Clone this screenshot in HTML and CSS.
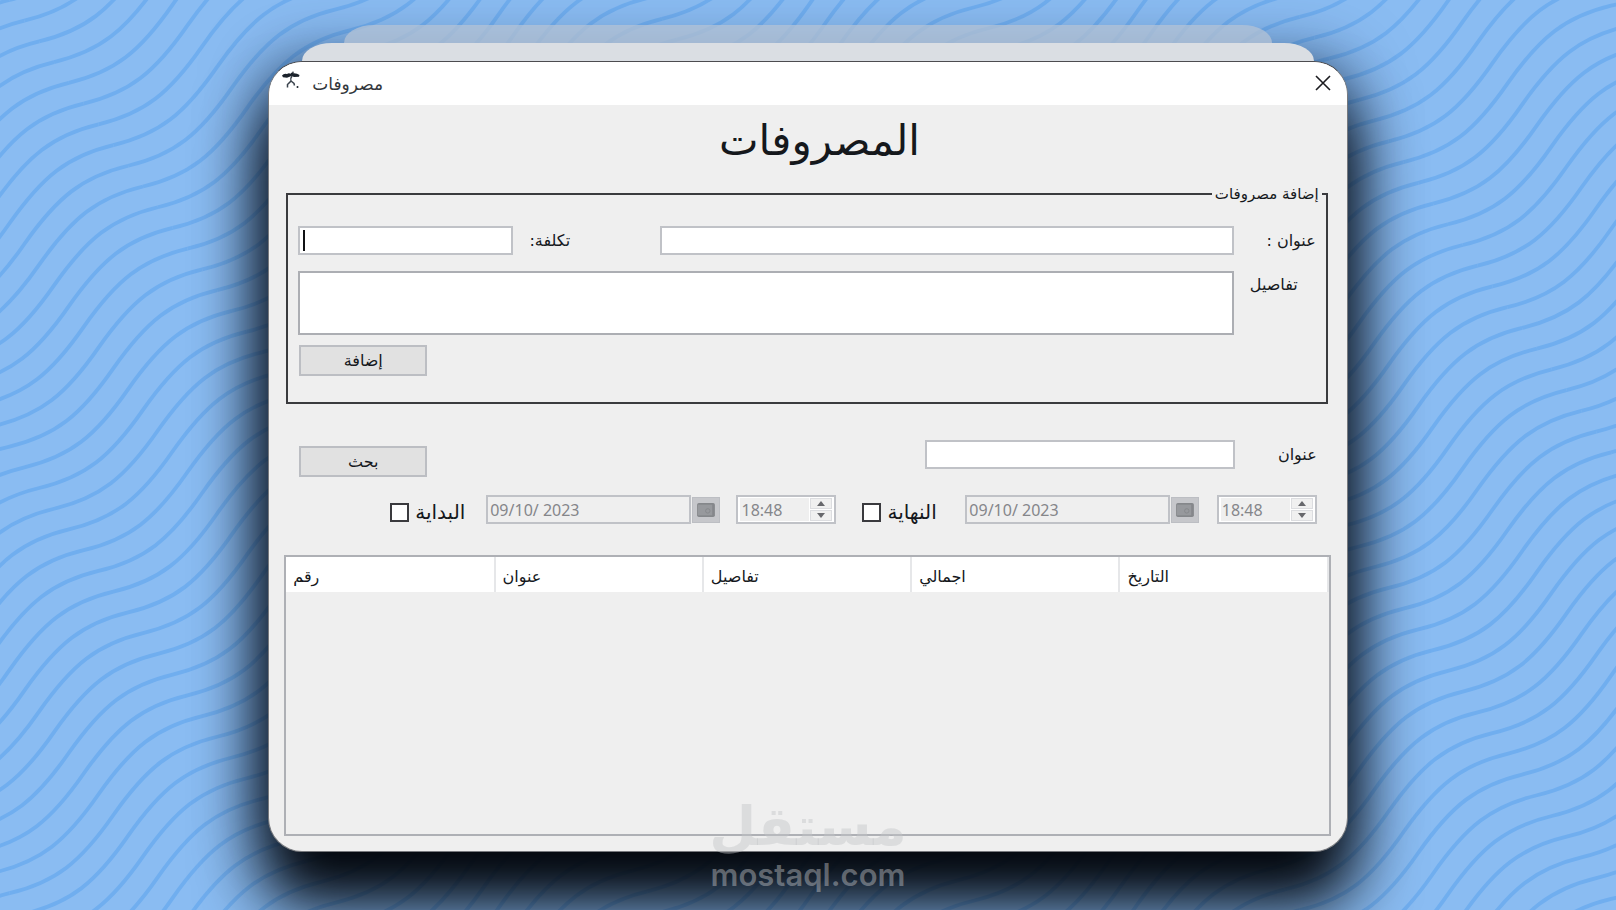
FILE: index.html
```html
<!DOCTYPE html>
<html lang="ar">
<head>
<meta charset="utf-8">
<title>مصروفات</title>
<link rel="stylesheet" href="styles.css">
</head>
<body>
<svg class="waves" viewBox="0 0 1616 910" preserveAspectRatio="xMidYMid slice" aria-hidden="true">
  <defs>
    <path id="half" d="M0 0c46-11 71-31 103.8-78.2c33-47 58-67.2 103.8-78.2c46-11 71-31 103.8-78.2c33-47 58-67.2 103.8-78.2"/>
    <g id="p4"><use href="#half"/><use href="#half" x="415.2" y="-312.8"/></g>
    <g id="p8"><use href="#p4"/><use href="#p4" x="830.4" y="-625.6"/></g>
    <g id="p16"><use href="#p8"/><use href="#p8" x="1660.8" y="-1251.2"/></g>
    <g id="w2"><use href="#p16"/><use href="#p16" x="14.83" y="20.73"/></g>
    <g id="w4"><use href="#w2"/><use href="#w2" x="29.66" y="41.46"/></g>
    <g id="w8"><use href="#w4"/><use href="#w4" x="59.32" y="82.92"/></g>
    <g id="w16"><use href="#w8"/><use href="#w8" x="118.64" y="165.84"/></g>
    <g id="w32"><use href="#w16"/><use href="#w16" x="237.28" y="331.68"/></g>
    <g id="w64"><use href="#w32"/><use href="#w32" x="474.56" y="663.36"/></g>
  </defs>
  <g class="wave-lines" transform="translate(-1250.9 917.6)">
    <use href="#w64"/>
    <use href="#w16" x="949.12" y="1326.72"/>
  </g>
</svg>

<main class="stage">
  <section class="window">
    <header class="titlebar">
      <svg class="app-icon" viewBox="0 0 18 18" aria-hidden="true">
        <path d="M0 4.500Q2 2 5 3Q7 1.500 8.500 2.800Q10 .8 11.500 2.200Q15 2 17.500 4L17 5.800L12 6L9.500 5L5 6.800L1 6.200Z"/>
        <path class="line" d="M10 5Q8 7.500 9 10L5.500 13.500V16.500M9 10L12 12.500L12.500 14.500"/>
        <circle cx="15.500" cy="16" r="1"/><circle cx="11" cy="1.200" r=".8"/>
      </svg>
      <span class="titlebar-text" dir="rtl">مصروفات</span>
      <button class="close" type="button" aria-label="إغلاق">
        <svg viewBox="0 0 16 16"><path d="M1 1L15 15M15 1L1 15"/></svg>
      </button>
    </header>

    <div class="content">
      <h1 dir="rtl">المصروفات</h1>

      <fieldset class="add" dir="rtl">
        <legend>إضافة مصروفات</legend>
        <div class="add-grid" dir="ltr">
          <input class="field cost" id="cost" type="text">
          <label class="cost-label" for="cost" dir="rtl">تكلفة:</label>
          <input class="field" id="title" type="text">
          <label class="side-label" for="title" dir="rtl">عنوان :</label>
          <textarea class="field details" id="details"></textarea>
          <label class="side-label details-label" for="details" dir="rtl">تفاصيل</label>
        </div>
        <div class="add-actions" dir="ltr"><button class="btn" type="button">إضافة</button></div>
      </fieldset>

      <div class="search">
        <button class="btn" type="button">بحث</button>
        <input class="field search-field" id="q" type="text">
        <label class="side-label" for="q" dir="rtl">عنوان</label>
      </div>

      <div class="range">
        <div class="range-group">
          <input class="check" id="from" type="checkbox">
          <label class="range-label" for="from">البداية</label>
          <input class="date" type="text" value="09/10/ 2023" aria-label="تاريخ البداية" disabled>
          <button class="cal" type="button" aria-label="تقويم البداية" disabled>
            <svg viewBox="0 0 22 18"><rect x="1" y="1" width="20" height="16" rx="2"/><rect class="face" x="2" y="3" width="16" height="12"/><circle cx="13" cy="10" r="2.500"/></svg>
          </button>
          <div class="time">
            <input type="text" value="18:48" aria-label="وقت البداية" disabled>
            <div class="spin">
              <button type="button" aria-label="زيادة" disabled><svg viewBox="0 0 8 5"><path d="M0 5L4 0L8 5Z"/></svg></button>
              <button type="button" aria-label="إنقاص" disabled><svg viewBox="0 0 8 5"><path d="M0 0L4 5L8 0Z"/></svg></button>
            </div>
          </div>
        </div>
        <div class="range-group">
          <input class="check" id="to" type="checkbox">
          <label class="range-label" for="to">النهاية</label>
          <input class="date" type="text" value="09/10/ 2023" aria-label="تاريخ النهاية" disabled>
          <button class="cal" type="button" aria-label="تقويم النهاية" disabled>
            <svg viewBox="0 0 22 18"><rect x="1" y="1" width="20" height="16" rx="2"/><rect class="face" x="2" y="3" width="16" height="12"/><circle cx="13" cy="10" r="2.500"/></svg>
          </button>
          <div class="time">
            <input type="text" value="18:48" aria-label="وقت النهاية" disabled>
            <div class="spin">
              <button type="button" aria-label="زيادة" disabled><svg viewBox="0 0 8 5"><path d="M0 5L4 0L8 5Z"/></svg></button>
              <button type="button" aria-label="إنقاص" disabled><svg viewBox="0 0 8 5"><path d="M0 0L4 5L8 0Z"/></svg></button>
            </div>
          </div>
        </div>
      </div>

      <div class="list">
        <table>
          <thead>
            <tr><th>رقم</th><th>عنوان</th><th>تفاصيل</th><th>اجمالي</th><th>التاريخ</th></tr>
          </thead>
        </table>
      </div>
    </div>
  </section>

  <div class="sheet sheet-back"></div>
  <div class="sheet sheet-mid"></div>

  <div class="brand">
    <span class="brand-ar">مستقل</span>
    <span class="brand-en">mostaql.com</span>
  </div>
</main>
</body>
</html>
```
FILE: styles.css
```css
* {
  box-sizing: border-box;
}

body {
  margin: 0;
  min-height: 100vh;
  background: #8abcf2;
  color: #15181c;
  font: 16px/20px "DejaVu Sans", sans-serif;
  position: relative;
  overflow-x: hidden;
}

.waves {
  position: absolute;
  inset: 0;
  width: 100%;
  height: 100%;
}

.wave-lines {
  fill: none;
  stroke: #70aeef;
  stroke-width: 3.8;
}

.stage {
  position: relative;
  min-height: 100vh;
  padding: 61px 0 58px;
  display: flex;
  flex-direction: column;
  align-items: center;
}

.sheet {
  position: absolute;
}

.sheet-back {
  top: 25px;
  width: 57.4%;
  height: 18px;
  border-radius: 30px 30px 0 0 / 18px 18px 0 0;
  background: rgba(180, 195, 214, 0.75);
}

.sheet-mid {
  top: 43px;
  width: 62.6%;
  height: 18px;
  border-radius: 30px 30px 0 0 / 18px 18px 0 0;
  background: #dadee3;
}

.window {
  position: relative;
  flex: 1;
  width: 66.8%;
  min-width: 960px;
  display: flex;
  flex-direction: column;
  background: #efefef;
  border: 1px solid #77797d;
  border-top-color: #4c4c50;
  border-radius: 34px;
  box-shadow: 0 48px 64px 6px #03060b, 0 0 64px rgba(0, 20, 50, 0.6);
}

.titlebar {
  height: 43px;
  padding: 0 12px 2px 13px;
  display: flex;
  align-items: center;
  background: #fff;
  border-radius: 33px 33px 0 0;
}

.app-icon {
  width: 18px;
  height: 18px;
  margin-bottom: 6px;
  fill: #1b222b;
}

.app-icon .line {
  fill: none;
  stroke: #3a434d;
  stroke-width: 1.5;
}

.titlebar-text {
  flex: 1;
  margin: 2px 0 0 12px;
  font-size: 17px;
  text-align: left;
  color: #33373c;
}

.close {
  width: 24px;
  height: 24px;
  padding: 4px;
  border: 0;
  background: none;
}

.close svg {
  display: block;
  fill: none;
  stroke: #1c1c20;
  stroke-width: 1.6;
}

.content {
  flex: 1;
  display: flex;
  flex-direction: column;
  padding: 0 16px 15px 15px;
}

h1 {
  margin: 0;
  padding: 6px 0 0 24px;
  font-size: 42px;
  line-height: 60px;
  font-weight: 400;
  text-align: center;
}

.add {
  margin: 13px 3px 0 2px;
  padding: 22px 10px 26px 10px;
  border: 2px solid #3a3b3e;
}

.add legend {
  margin-left: 0;
  margin-right: -6px;
  padding: 0 3px;
  font-size: 15px;
}

.add-grid {
  display: grid;
  grid-template-columns: 215fr 147px 574fr 82px;
  row-gap: 16px;
}

.field {
  width: 100%;
  height: 29px;
  padding: 2px 6px;
  border: 2px solid #c0c2c7;
  background: #fff;
  font: inherit;
  border-radius: 0;
}

.cost {
  background: linear-gradient(#101114, #101114) no-repeat 3px 2px / 2px 21px #fff;
}

.cost-label {
  padding: 5px 90px 0 0;
  white-space: nowrap;
}

.side-label {
  padding-top: 5px;
  white-space: nowrap;
}

.details {
  grid-column: 1 / 4;
  display: block;
  height: 64px;
  border-color: #acaeb3;
  resize: none;
}

.details-label {
  padding: 4px 18px 0 0;
}

.add-actions {
  display: flex;
  padding: 10px 1px 0;
}

.btn {
  width: 128px;
  height: 31px;
  padding: 0;
  border: 2px solid #bcbec3;
  background: #e1e1e1;
  color: inherit;
  font: inherit;
  line-height: 18px;
}

.search {
  display: flex;
  align-items: flex-start;
  margin-top: 36px;
  padding: 0 14px 0 15px;
}

.search .btn {
  margin-top: 6px;
}

.search-field {
  width: 30.4%;
  margin-left: auto;
}

.search .side-label {
  width: 82px;
}

.range {
  display: flex;
  gap: 26px;
  margin-top: 18px;
  padding: 0 14px 0 106px;
}

.range-group {
  flex: 446 1 0;
  display: flex;
  align-items: center;
}

.range-group + .range-group {
  flex-grow: 454;
}

.check {
  appearance: none;
  width: 19px;
  height: 19px;
  margin: 5px 6px 0 0;
  border: 2px solid #3a3a3e;
  background: #fff;
}

.range-label {
  flex: 1;
  padding-top: 5px;
  font-size: 20px;
}

.date {
  width: 46%;
  height: 29px;
  padding: 0 2px;
  border: 2px solid #c0c2c7;
  border-radius: 0;
  background: #efefef;
  color: #85868a;
  font: 16px/20px "Noto Sans", sans-serif;
}

.range-group + .range-group .date {
  width: 45%;
}

.cal {
  width: 28px;
  height: 26px;
  margin: 0 16px 0 1px;
  padding: 4px 3px;
  border: 1px solid #bcbec3;
  background: #c6c7cb;
}

.range-group + .range-group .cal {
  margin-right: 18px;
}

.cal svg {
  display: block;
  width: 100%;
  height: 100%;
  fill: #85878b;
}

.cal .face {
  fill: #97999d;
}

.cal circle {
  fill: none;
  stroke: #85878b;
}

.time {
  width: 100px;
  height: 29px;
  display: flex;
  padding: 1px 2px;
  border: 2px solid #c0c2c7;
  background: #fff;
}

.time input {
  flex: 1;
  width: 0;
  padding: 0 0 0 1px;
  border: 0;
  border-radius: 0;
  background: #efefef;
  color: #85868a;
  font: 16px/20px "Noto Sans", sans-serif;
}

.spin {
  width: 22px;
  margin-left: 1px;
  display: flex;
  flex-direction: column;
  gap: 1px;
}

.spin button {
  flex: 1;
  min-height: 0;
  display: flex;
  align-items: center;
  justify-content: center;
  padding: 0;
  border: 1px solid #dcdde0;
  background: #f0f0f0;
}

.spin svg {
  width: 8px;
  height: 5px;
  fill: #67686c;
}

.list {
  flex: 1;
  min-height: 200px;
  margin-top: 31px;
  border: 2px solid #aeb0b5;
}

table {
  width: 100%;
  table-layout: fixed;
  border-collapse: collapse;
}

th {
  height: 35px;
  padding: 5px 7px 0;
  border-right: 2px solid #e6e7e9;
  background: #fff;
  font-weight: 400;
  text-align: left;
}

.brand {
  position: absolute;
  bottom: 15px;
  left: 0;
  right: 0;
  display: flex;
  flex-direction: column;
  align-items: center;
  color: rgba(195, 197, 200, 0.45);
  font-weight: 700;
  pointer-events: none;
}

.brand-ar {
  font-size: 54px;
  line-height: 56px;
}

.brand-en {
  font: 600 31px/40px Inter, sans-serif;
}
```
